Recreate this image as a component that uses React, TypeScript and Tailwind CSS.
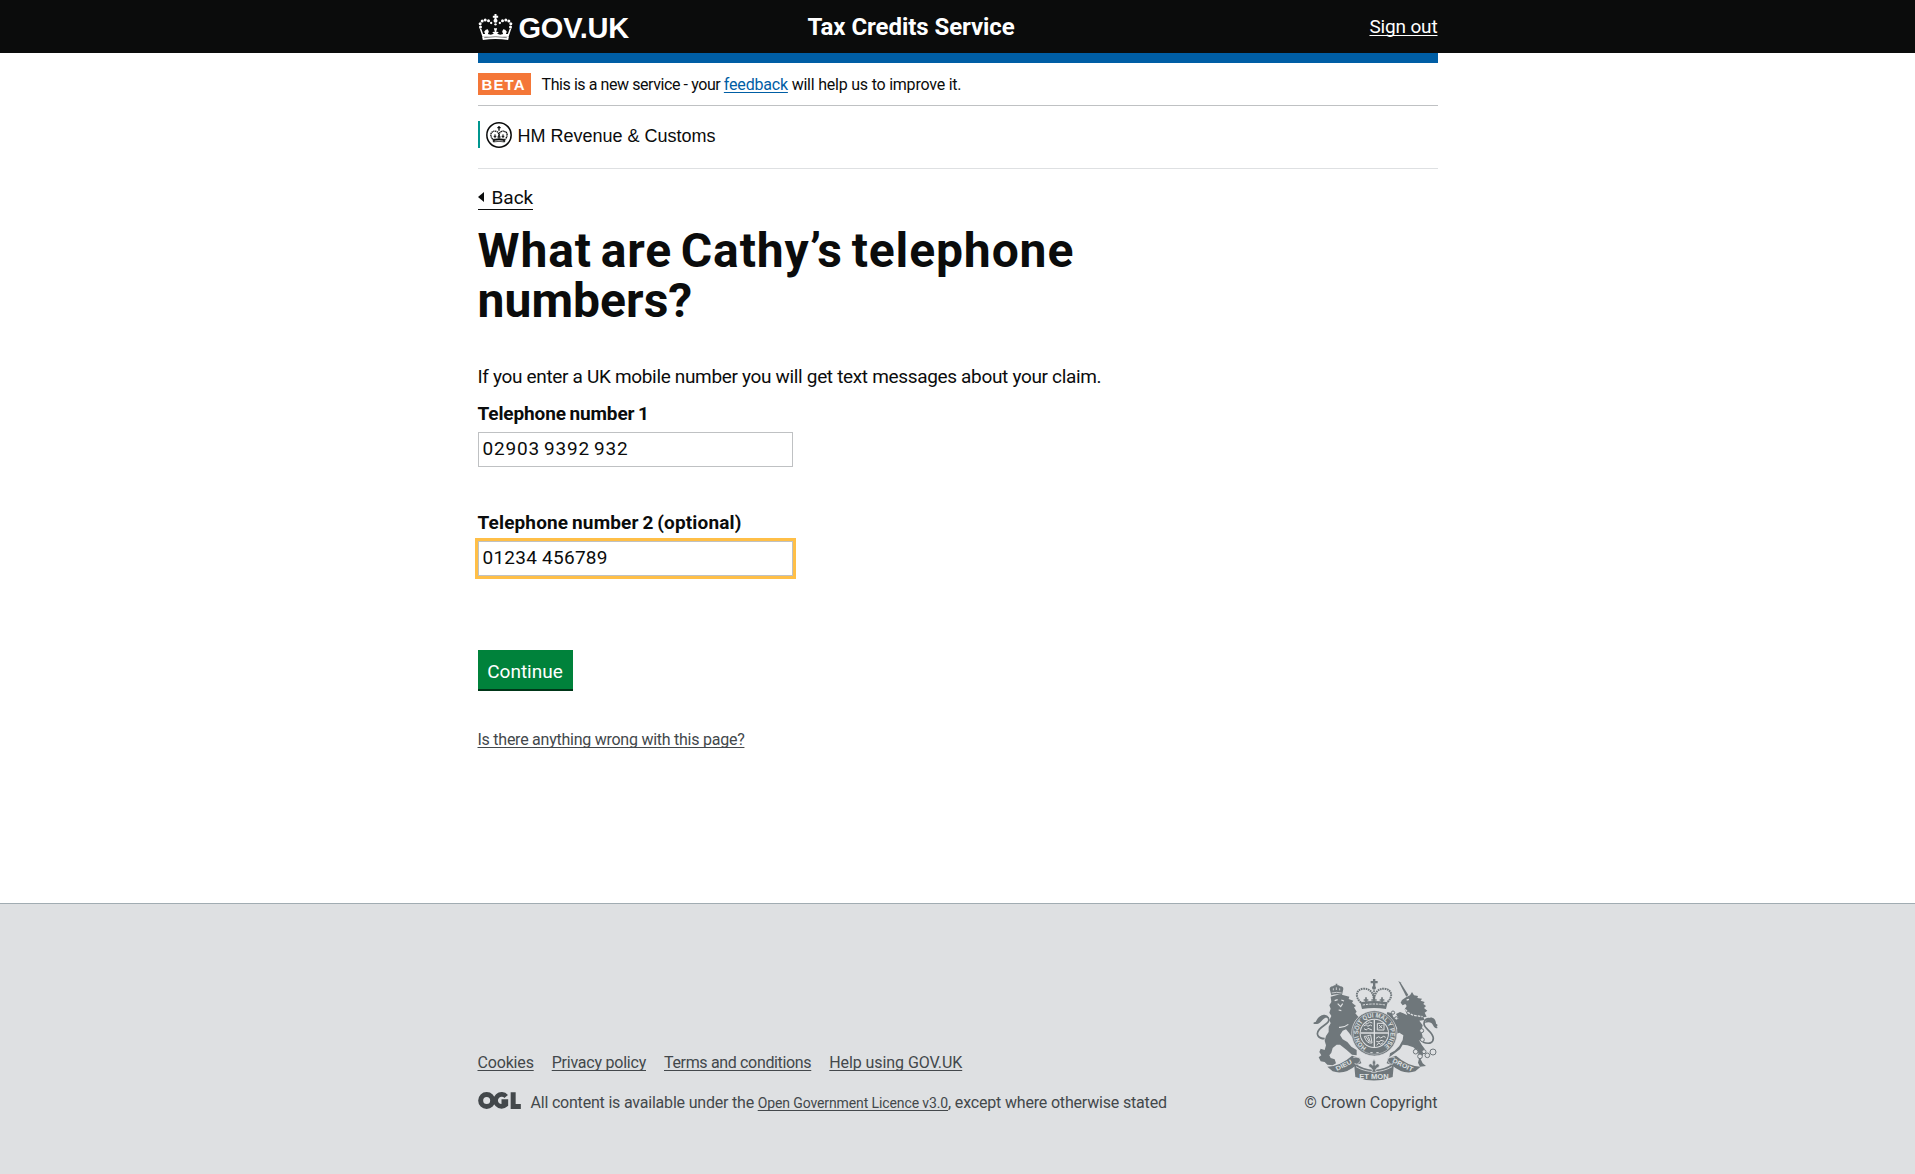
import React from 'react';

const link =
  'underline decoration-1 underline-offset-2 [text-decoration-skip-ink:none]';

type Dot = [number, number, number];

const crownBeads: Dot[] = [
  [31, 77, 4.5], [30, 67, 4.5], [36, 59, 4.5], [45, 56, 4.5], [55, 58, 4.5], [63, 65, 3.5],
  [121, 77, 4.5], [122, 67, 4.5], [116, 59, 4.5], [107, 56, 4.5], [97, 58, 4.5], [89, 65, 3.5],
];

function GovCrown() {
  return (
    <svg className="h-[26px] w-[35px]" viewBox="24 38 104 78" fill="#fff">
      {crownBeads.map(([x, y, r], i) => (
        <circle key={i} cx={x} cy={y} r={r} />
      ))}
      <path d="M73 38h6v5h5v6h-5v4h-6v-4h-5v-6h5z" />
      <circle cx="76" cy="58" r="6" />
      <circle cx="76" cy="69" r="3.5" />
      <path d="M28 80L34 84L39 98L45 98L42 91L47 85L53 84L56 91L53 98L62 100L71 97L66 92L74 91L71 81H81L78 91L86 92L81 97L90 100L99 98L96 91L99 84L105 85L110 91L107 98L113 98L118 84L124 80L115 107Q76 101 37 107z" />
      <path d="M36 107Q76 100 116 107L114 116Q76 110 38 116z" />
      <path d="M42 109Q76 103 110 109" fill="none" stroke="#0b0c0c" strokeWidth="1.500" />
    </svg>
  );
}

function HmrcCrest() {
  return (
    <svg className="h-[26px] w-[26px]" viewBox="0 0 78 78" fill="none" stroke="#0b0c0c">
      <circle cx="39" cy="39" r="36.5" strokeWidth="4.5" />
      <path d="M39 12v14M34 17h10" strokeWidth="4" />
      <path d="M20 52C8 36 18 25 31 28c6 2 8 7 8 16 0-9 2-14 8-16 13-3 23 8 11 24" strokeWidth="4" strokeDasharray="4 1.5" />
      <path d="M21 52q18-4 36 0l-1 8q-17-4-34 0z" strokeWidth="2" fill="#0b0c0c" />
      <path d="M26 57q13-3 26 0" stroke="#fff" strokeWidth="2" />
      <path d="M39 39v11M34 45h10M27 37v11M23 43h8M51 37v11M47 43h8" strokeWidth="3" />
    </svg>
  );
}

const chainRings: Dot[] = [
  [309, 128, 5], [319, 145, 5], [395, 182, 6], [397, 209, 6],
  [377, 245, 7], [390, 259, 7], [402, 245, 6], [412, 256, 7], [429, 246, 9],
];

function RoyalArms() {
  return (
    <svg className="h-[102px] w-[125px]" viewBox="69 27 375 306" fill="#6f777b">
      {/* Crown */}
      <path d="M249 27h7v6h7v7h-7v8h-7v-8h-7v-7h7z" />
      <circle cx="252" cy="53" r="6" />
      <g fill="none" stroke="#6f777b">
        <path d="M213 98C194 81 197 59 220 56c20-1 30 12 32 34 2-22 12-35 32-34 23 3 26 25 7 42" strokeWidth="6" strokeDasharray="5 2" />
        <path d="M252 61v29" strokeWidth="5" strokeDasharray="5 2" />
        <path d="M252 79v19M244 90h16M228 82v15M221 90h14M276 82v15M269 90h14" strokeWidth="5" />
      </g>
      <path d="M211 97q41-8 82 0l-5 20q-36-6-72 0z" />
      <path d="M218 105q34-6 68 0" fill="none" stroke="#dee0e2" strokeWidth="3" strokeDasharray="7 3" />

      {/* Lion */}
      <path d="M124 76L119 57Q120 48 129 49Q132 44 137 46V41H142V46Q147 44 150 49Q160 48 160 57L156 75Q140 70 124 76z" />
      <path d="M125 69q15-4 30 0M130 55v6M149 55v6M139 52v8" fill="none" stroke="#dee0e2" strokeWidth="2.5" />
      <path d="M122 80L150 73L178 80L176 87L190 92L186 98L198 108L192 112L200 125L196 130L206 142L196 152L190 165L188 184L202 192L198 212L188 204L178 190L168 178L158 182L150 195L158 208L172 216L184 230L200 240V256L186 254L170 240L150 224L140 224L128 234L124 248L118 256L122 264L134 268L138 280L128 286L112 284L104 276L92 274L86 262L94 256L88 246L92 236L104 240L108 226L104 212L108 198L116 186V170L122 160L118 150L124 138L118 128L122 116L118 106L124 96z" />
      <path d="M134 92l9-3M154 90l8 3M143 101l9 9 6-9M146 120l8 2M147 172q16 1 28-9" fill="none" stroke="#dee0e2" strokeWidth="3.5" />
      <path d="M104 206c-20 0-28-14-16-28 14-15 34-19 27-34-7-12-21-8-27 3-4 10-9 13-17 12" fill="none" stroke="#6f777b" strokeWidth="5" />
      <path d="M70 162c10-4 8-15 18-22 10-6 21-3 28 3-11-2-17 5-22 11-6 8-13 9-24 8z" />

      {/* Unicorn */}
      <path d="M325 33l6 4 24 38-6 5z" />
      <path d="M348 82L360 76L366 66L372 76L384 78L382 84L396 86L392 92L404 96L400 102L408 108L402 114L412 122L404 128L410 140L400 142L404 150L388 152L398 166L394 184L398 200L388 212L396 226L404 236L400 252L392 268L398 280L408 288L390 290L384 278L388 262L384 246L370 232L352 226L338 224L330 238L316 248L306 256L298 262L300 250L314 242L328 228L338 210L340 196L328 188L312 194L304 206L296 204L300 190L322 176L316 164L300 160L294 170L288 166L292 154L302 150L298 138L290 134L292 126L306 130L310 142L326 146L318 132L330 126L340 130L352 136L344 118L350 108L346 102L338 106L332 98L336 90z" />
      <path d="M350 90l7-2M346 118l8 10 16 8 28 4" fill="none" stroke="#dee0e2" strokeWidth="4" strokeDasharray="8 3" />
      <path d="M398 216c20 8 32 3 32-12-3-21-28-28-28-43 1-16 16-20 25-9 4 8 7 13 15 15" fill="none" stroke="#6f777b" strokeWidth="5" />
      <path d="M443 174c-12 3-12-8-18-14-6-5-13-4-20-1 4-15 18-22 28-12 7 7 3 17 10 27z" />

      {/* Shield and garter */}
      <circle cx="253" cy="190" r="68" stroke="#dee0e2" strokeWidth="2" />
      <circle cx="253" cy="190" r="63" fill="none" stroke="#dee0e2" strokeWidth="1.500" />
      <circle cx="253" cy="190" r="44" fill="#dee0e2" />
      <circle cx="253" cy="190" r="41" />
      <path id="garter" d="M230 232A48 48 0 1 1 276 232" fill="none" />
      <text fill="#dee0e2" className="font-['Liberation_Sans'] text-[19px] font-bold" textLength="246" lengthAdjust="spacingAndGlyphs">
        <textPath href="#garter">HONI SOIT QUI MAL Y PENSE</textPath>
      </text>
      <g fill="none" stroke="#dee0e2" strokeWidth="3">
        <path d="M253 149v82M212 189h82" strokeWidth="4" />
        <path d="M221 168l8-4 4 5 8-4 5 3M222 176l7 4 5-5 12 5M225 158l8 3 6-5 8 3" />
        <path d="M260 226l6-7 6 4 7-5M258 205l8-5 6 4 9-5 6 3M259 214l8 2 6-5 10 3" />
        <path d="M262 160h20v20h-20zM267 165l10 10M277 165l-10 10" />
        <path d="M223 199c8 0 14-3 19-4l4 24q-17 3-23-20zM229 201l9 15M235 200l6 16" />
        <path d="M241 248h7M259 248h7" />
      </g>

      {/* Motto ribbon */}
      <path d="M112 290Q152 288 186 257L210 264L214 280L200 284Q164 316 128 304z" />
      <path d="M392 290Q352 288 318 257L294 264L290 280L304 284Q340 316 376 304z" />
      <path d="M192 278Q252 320 312 278L308 321Q252 342 196 321z" />
      <path d="M190 262c18-4 26 6 18 15-4 6-12 8-14 2M314 262c-18-4-26 6-18 15 4 6 12 8 14 2M198 290c34 20 74 20 108 0" fill="none" stroke="#dee0e2" strokeWidth="2.500" />
      <g fill="#dee0e2" className="font-['Liberation_Sans'] text-[19px] font-bold">
        <text x="141" y="303" textLength="52" lengthAdjust="spacingAndGlyphs" transform="rotate(-27 141 303)">
          DIEU
        </text>
        <text x="306" y="276" textLength="66" lengthAdjust="spacingAndGlyphs" transform="rotate(26 306 276)">
          DROIT
        </text>
        <text x="208" y="326" textLength="88" lengthAdjust="spacingAndGlyphs">
          ET MON
        </text>
      </g>
      <path d="M252 268Q260 276 255 286Q265 276 268 286Q268 294 260 294V299H256L259 307H245L248 299H244V294Q236 294 236 286Q239 276 249 286Q244 276 252 268z" stroke="#dee0e2" strokeWidth="2" />

      {/* Chain */}
      {chainRings.map(([x, y, r], i) => (
        <circle key={i} cx={x} cy={y} r={r} fill="#dee0e2" stroke="#6f777b" strokeWidth="3" />
      ))}
    </svg>
  );
}

function OglLogo() {
  return (
    <svg className="-mt-px h-[17px] w-[43px] shrink-0" viewBox="0 0 128 51" fill="none" stroke="#43484b">
      <circle cx="25.500" cy="25.500" r="18" strokeWidth="15" />
      <path d="M84 13.500A18 18 0 1 0 83 38V29H70" strokeWidth="14" />
      <path d="M105 1V43.500H128" strokeWidth="15" />
    </svg>
  );
}

function Field({
  id,
  label,
  value,
  labelClass,
  inputClass,
}: {
  id: string;
  label: string;
  value: string;
  labelClass: string;
  inputClass: string;
}) {
  return (
    <div>
      <label htmlFor={id} className={`block text-[19px] leading-[25px] font-bold ${labelClass}`}>
        {label}
      </label>
      <input
        id={id}
        type="text"
        defaultValue={value}
        className={`mt-[6px] block h-[35px] w-[315px] border border-[#bfc1c3] bg-white px-1 pb-[2px] text-[19px] outline-none ${inputClass}`}
      />
    </div>
  );
}

export default function App() {
  return (
    <div className="flex min-h-[1174px] flex-col bg-white font-[Roboto,sans-serif] text-[#0b0c0c]">
      <header className="h-[53px] bg-[#0b0c0c] text-white">
        <div className="mx-auto flex h-full w-[960px] items-center">
          <div className="flex w-[330px] items-center gap-[6px]">
            <GovCrown />
            <span className="pt-[2px] font-['Liberation_Sans',sans-serif] text-[29px] leading-[50px] font-bold tracking-[-0.2px]">
              GOV.UK
            </span>
          </div>
          <span className="text-[24px] font-bold tracking-[-0.06px]">Tax Credits Service</span>
          <a href="#" className={`ml-auto pt-[2px] text-[19px] tracking-[-0.16px] ${link}`}>
            Sign out
          </a>
        </div>
      </header>

      <main className="mx-auto flex w-[960px] flex-col items-start">
        <div className="h-[10px] w-full bg-[#005ea5]" />

        <div className="flex h-[43px] w-full items-center border-b border-[#bfc1c3] text-[16px]">
          <strong className="mr-[11px] h-[22px] w-[53px] bg-[#f47738] pl-[4px] font-['Liberation_Sans',sans-serif] text-[15px] leading-[23px] font-bold tracking-[1.100px] text-white">
            BETA
          </strong>
          <p className="pt-[2px] tracking-[-0.22px] whitespace-pre">
            <span className="tracking-[-0.42px]">This is a new service - your </span>
            <a href="#" className={`tracking-[-0.19px] text-[#005ea5] ${link}`}>
              feedback
            </a>
            {' will help us to improve it.'}
          </p>
        </div>

        <div className="h-[63px] w-full border-b border-[#dee0e2] pt-[15px]">
          <div className="flex h-[27px] items-center border-l-2 border-[#00968f] pl-[6px]">
            <HmrcCrest />
            <span className="pt-[3px] pl-[6px] font-['Liberation_Sans',sans-serif] text-[18px]">
              HM Revenue &amp; Customs
            </span>
          </div>
        </div>

        <a href="#" className="mt-4 flex h-[25px] items-center border-b border-[#0b0c0c] text-[19px]">
          <svg className="mr-[8px] h-[10px] w-[6px]" viewBox="0 0 6 10">
            <path d="M6 0v10L0 5z" fill="#0b0c0c" />
          </svg>
          <span className="pt-[2px]">Back</span>
        </a>

        <h1 className="mt-4 w-[640px] text-[48px] leading-[50px] font-bold tracking-[0.88px] [word-spacing:-4px]">
          What are Cathy’s telephone <span className="tracking-[0.05px]">numbers?</span>
        </h1>

        <p className="mt-[38px] text-[19px] leading-[25px] tracking-[-0.33px]">
          If you enter a UK mobile number you will get text messages about your claim.
        </p>

        <div className="mt-3 flex flex-col gap-[43px]">
          <Field
            id="phone-1"
            label="Telephone number 1"
            value="02903 9392 932"
            labelClass="tracking-[-0.12px] [word-spacing:-1px]"
            inputClass="tracking-[0.82px] [word-spacing:-1.500px]"
          />
          <Field
            id="phone-2"
            label="Telephone number 2 (optional)"
            value="01234 456789"
            labelClass="tracking-[0.14px] [word-spacing:-1px]"
            inputClass="tracking-[0.25px] ring-3 ring-[#ffbf47]"
          />
        </div>

        <button className="mt-[74px] h-[41px] w-[95px] border-b-2 border-[#003618] bg-[#00823b] pt-[4px] text-center text-[19px] leading-[35px] text-white">
          Continue
        </button>

        <a href="#" className={`mt-[39px] text-[16px] leading-[20px] tracking-[-0.25px] text-[#43484b] ${link}`}>
          Is there anything wrong with this page?
        </a>
      </main>

      <footer className="mt-[153px] flex-1 border-t border-[#a1acb2] bg-[#dee0e2] text-[16px] leading-[20px] text-[#43484b]">
        <div className="mx-auto flex w-[960px] items-end justify-between pt-[75px]">
          <div>
            <nav className="flex gap-[18px]">
              <a href="#" className={`tracking-[-0.17px] ${link}`}>Cookies</a>
              <a href="#" className={`tracking-[-0.23px] ${link}`}>Privacy policy</a>
              <a href="#" className={`tracking-[-0.34px] ${link}`}>Terms and conditions</a>
              <a href="#" className={`tracking-[-0.08px] ${link}`}>Help using GOV.UK</a>
            </nav>
            <div className="mt-5 flex items-start">
              <OglLogo />
              <p className="ml-[10px] whitespace-pre">
                <span className="tracking-[-0.2px]">All content is available under the </span>
                <a href="#" className={`text-[14px] tracking-[-0.11px] ${link}`}>
                  Open Government Licence v3.0
                </a>
                <span className="tracking-[-0.18px]">, except where otherwise stated</span>
              </p>
            </div>
          </div>
          <div className="flex flex-col items-end gap-3">
            <RoyalArms />
            <span className="tracking-[-0.08px]">© Crown Copyright</span>
          </div>
        </div>
      </footer>
    </div>
  );
}
